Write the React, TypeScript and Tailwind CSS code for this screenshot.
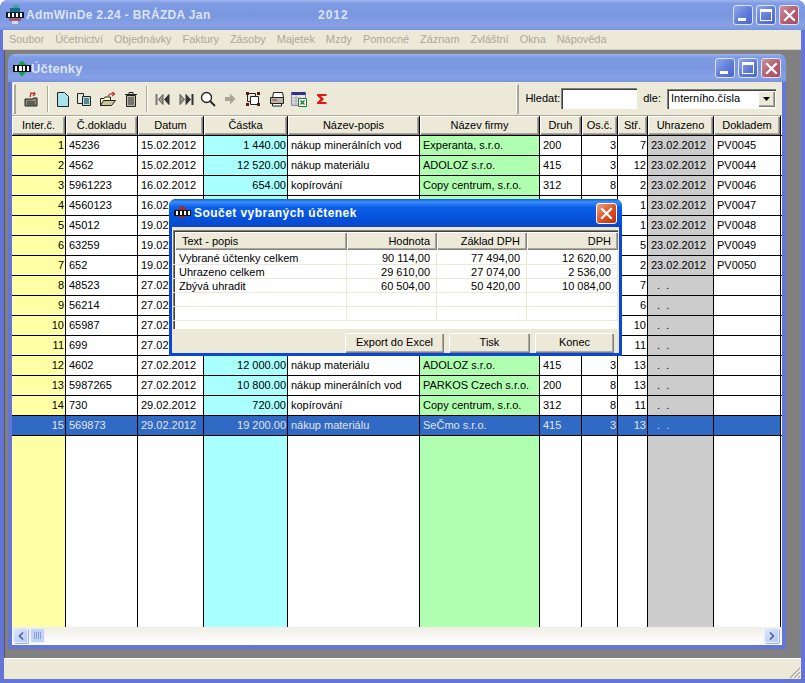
import { ChevronLeft, ChevronRight } from "lucide-react"

const cols = [
  { name: "Inter.č.", w: "w-[54px]", bg: "bg-[#ffffa6]", right: true },
  { name: "Č.dokladu", w: "w-[72px]", bg: "bg-white", right: false },
  { name: "Datum", w: "w-[66px]", bg: "bg-white", right: false },
  { name: "Částka", w: "w-[84px]", bg: "bg-[#aaffff]", right: true },
  { name: "Název-popis", w: "w-[132px]", bg: "bg-white", right: false },
  { name: "Název firmy", w: "w-[120px]", bg: "bg-[#b0ffb0]", right: false },
  { name: "Druh", w: "w-[42px]", bg: "bg-white", right: false },
  { name: "Os.č.", w: "w-[36px]", bg: "bg-white", right: true },
  { name: "Stř.", w: "w-[30px]", bg: "bg-white", right: true },
  { name: "Uhrazeno", w: "w-[66px]", bg: "bg-[#cccccc]", right: false },
  { name: "Dokladem", w: "w-[67px]", bg: "bg-white", right: false },
]

const rows = [
  ["1", "45236", "15.02.2012", "1 440.00", "nákup minerálních vod", "Experanta, s.r.o.", "200", "3", "7", "23.02.2012", "PV0045"],
  ["2", "4562", "15.02.2012", "12 520.00", "nákup materiálu", "ADOLOZ s.r.o.", "415", "3", "12", "23.02.2012", "PV0044"],
  ["3", "5961223", "16.02.2012", "654.00", "kopírování", "Copy centrum, s.r.o.", "312", "8", "2", "23.02.2012", "PV0046"],
  ["4", "4560123", "16.02.2012", "", "", "", "", "", "1", "23.02.2012", "PV0047"],
  ["5", "45012", "19.02.2012", "", "", "", "", "", "1", "23.02.2012", "PV0048"],
  ["6", "63259", "19.02.2012", "", "", "", "", "", "5", "23.02.2012", "PV0049"],
  ["7", "652", "19.02.2012", "", "", "", "", "", "2", "23.02.2012", "PV0050"],
  ["8", "48523", "27.02.2012", "", "", "", "", "", "7", "  .  .", ""],
  ["9", "56214", "27.02.2012", "", "", "", "", "", "6", "  .  .", ""],
  ["10", "65987", "27.02.2012", "", "", "", "", "", "10", "  .  .", ""],
  ["11", "699", "27.02.2012", "", "", "", "", "", "11", "  .  .", ""],
  ["12", "4602", "27.02.2012", "12 000.00", "nákup materiálu", "ADOLOZ s.r.o.", "415", "3", "13", "  .  .", ""],
  ["13", "5987265", "27.02.2012", "10 800.00", "nákup minerálních vod", "PARKOS Czech s.r.o.", "200", "8", "13", "  .  .", ""],
  ["14", "730", "29.02.2012", "720.00", "kopírování", "Copy centrum, s.r.o.", "312", "8", "11", "  .  .", ""],
  ["15", "569873", "29.02.2012", "19 200.00", "nákup materiálu", "SeČmo s.r.o.", "415", "3", "13", "  .  .", ""],
]

const sumCols = [
  { name: "Text - popis", w: "w-[172px]", right: false },
  { name: "Hodnota", w: "w-[90px]", right: true },
  { name: "Základ DPH", w: "w-[90px]", right: true },
  { name: "DPH", w: "w-[91px]", right: true },
]

const sumRows = [
  ["Vybrané účtenky celkem", "90 114,00", "77 494,00", "12 620,00"],
  ["Uhrazeno celkem", "29 610,00", "27 074,00", "2 536,00"],
  ["Zbývá uhradit", "60 504,00", "50 420,00", "10 084,00"],
  ["", "", "", ""],
  ["", "", "", ""],
]

const bevel = "shadow-[inset_1px_1px_0_#ffffff,inset_-1px_-1px_0_#808080,inset_-2px_-2px_0_#aca899]"
const sunken = "shadow-[inset_1px_1px_0_#808080,inset_2px_2px_0_#404040,inset_-1px_-1px_0_#ffffff]"
const caption = "bg-[linear-gradient(180deg,#9db3ee,#7f9be3_12%,#7a96df_50%,#86a1e6_85%,#7a94dc)]"

function WinBtn({ kind }: { kind: "min" | "max" | "close" }) {
  const color =
    kind === "close"
      ? "bg-[linear-gradient(135deg,#c8909c,#b45a6c_60%,#a84a5e)]"
      : "bg-[linear-gradient(135deg,#8fa8ea,#5c78d8_60%,#4a66cc)]"
  return (
    <div className={`w-[20px] h-[20px] ${color} rounded-[3px] border border-[#dfe6f8] flex items-center justify-center relative`}>
      {kind === "min" && <div className="absolute left-[4px] bottom-[3px] w-[8px] h-[3px] bg-white" />}
      {kind === "max" && <div className="w-[12px] h-[12px] border border-white border-t-[3px]" />}
      {kind === "close" && (
        <svg width="13" height="13" viewBox="0 0 13 13">
          <path d="M2 2 L11 11 M11 2 L2 11" stroke="#fff" strokeWidth="2.2" strokeLinecap="square" />
        </svg>
      )}
    </div>
  )
}

function AppIcon() {
  return (
    <svg width="18" height="20" viewBox="0 0 18 20" shapeRendering="crispEdges">
      <rect x="7" y="0" width="6" height="5" fill="#3aa0b0" />
      <rect x="4" y="3" width="10" height="4" fill="#1c6f80" />
      <rect x="0" y="7" width="18" height="6" fill="#111827" />
      <rect x="2" y="8" width="2" height="4" fill="#ffffff" />
      <rect x="6" y="8" width="2" height="4" fill="#ffffff" />
      <rect x="10" y="8" width="2" height="4" fill="#ffffff" />
      <rect x="14" y="8" width="2" height="4" fill="#ffffff" />
      <rect x="3" y="13" width="12" height="3" fill="#a05a78" />
      <rect x="6" y="16" width="6" height="3" fill="#d8d8e8" />
    </svg>
  )
}

function InnerIcon() {
  return (
    <svg width="18" height="17" viewBox="0 0 19 17" shapeRendering="crispEdges">
      <path d="M9.5 0 L17 8 L9.5 17 L2 8 Z" fill="#12a04a" shapeRendering="auto" />
      <rect x="0" y="5" width="19" height="7" fill="#111111" />
      <rect x="2" y="6" width="2" height="5" fill="#ffffff" />
      <rect x="6" y="6" width="3" height="5" fill="#ffffff" />
      <rect x="11" y="6" width="2" height="5" fill="#ffffff" />
      <rect x="15" y="6" width="2" height="5" fill="#ffffff" />
    </svg>
  )
}

function DialogIcon() {
  return (
    <svg width="17" height="16" viewBox="0 0 17 16" shapeRendering="crispEdges">
      <path d="M8 0 L15 7 L8 15 L1 7 Z" fill="#8c3040" shapeRendering="auto" />
      <rect x="0" y="5" width="17" height="6" fill="#111111" />
      <rect x="2" y="6" width="2" height="4" fill="#ffffff" />
      <rect x="6" y="6" width="2" height="4" fill="#ffffff" />
      <rect x="10" y="6" width="2" height="4" fill="#ffffff" />
      <rect x="14" y="6" width="2" height="4" fill="#ffffff" />
    </svg>
  )
}

const tools = [
  {
    ml: "ml-[7px]",
    w: 16,
    d: (
      <>
        <path d="M2 8 H9 L11 7 H14 V15 H2 Z" fill="#8a8a7a" stroke="#222" />
        <path d="M4 10 H12 V14 H4 Z" fill="#5e5e50" />
        <path d="M7 6 L8 2 L12 3 M11 1 L12 3 L10 5" fill="none" stroke="#c0302a" strokeWidth="1.3" />
      </>
    ),
  },
  {
    ml: "ml-[17px]",
    w: 14,
    d: <path d="M1.5 1.5 H8.5 L12.5 5.5 V15.5 H1.5 Z" fill="#a8e4ee" stroke="#222" />,
  },
  {
    ml: "ml-[6px]",
    w: 16,
    d: (
      <>
        <path d="M1.5 2.5 H7.5 V12.5 H1.5 Z" fill="#e8e8e0" stroke="#222" />
        <path d="M6.5 5.5 H14.5 V14.5 H6.5 Z" fill="#a8e4ee" stroke="#222" />
        <path d="M8 8 H13 M8 10 H13 M8 12 H13" stroke="#222" />
      </>
    ),
  },
  {
    ml: "ml-[7px]",
    w: 18,
    d: (
      <>
        <path d="M1.5 7.5 H5 L6 6 H11.5 V14.5 H1.5 Z" fill="#fff7c8" stroke="#222" />
        <path d="M1.5 14.5 L4.5 9.5 H16.5 L12.5 14.5 Z" fill="#c8c49c" stroke="#222" />
        <path d="M9 5 Q11 1.5 15 3 M13.5 1 L15.5 3 L13 5" fill="none" stroke="#c0302a" strokeWidth="1.2" />
      </>
    ),
  },
  {
    ml: "ml-[7px]",
    w: 14,
    d: (
      <>
        <path d="M1 3.5 H13 M5 3 V1.5 H9 V3" fill="none" stroke="#222" />
        <path d="M2.5 4.5 H11.5 V15.5 H2.5 Z" fill="#b8b8a8" stroke="#222" />
        <path d="M5 6 V14 M7 6 V14 M9 6 V14" stroke="#333" />
      </>
    ),
  },
  {
    ml: "ml-[17px]",
    w: 16,
    d: (
      <>
        <path d="M1.5 3 V14" stroke="#777" strokeWidth="2" />
        <path d="M8 3.5 L3.5 8.5 L8 13.5 Z" fill="#9a9a8c" stroke="#555" />
        <path d="M14 3.5 L9.5 8.5 L14 13.5 Z" fill="#333" stroke="#333" />
      </>
    ),
  },
  {
    ml: "ml-[7px]",
    w: 16,
    d: (
      <>
        <path d="M14.5 3 V14" stroke="#333" strokeWidth="2" />
        <path d="M8 3.5 L12.5 8.5 L8 13.5 Z" fill="#333" stroke="#333" />
        <path d="M2 3.5 L6.5 8.5 L2 13.5 Z" fill="#9a9a8c" stroke="#555" />
      </>
    ),
  },
  {
    ml: "ml-[6px]",
    w: 16,
    d: (
      <>
        <circle cx="6.5" cy="6.5" r="5" fill="#ffffff" stroke="#222" strokeWidth="1.3" />
        <path d="M10 10 L15 15" stroke="#222" strokeWidth="1.8" />
      </>
    ),
  },
  {
    ml: "ml-[8px]",
    w: 12,
    d: <path d="M1 6 H6 V2.5 L11.5 8 L6 13.5 V10 H1 Z" fill="#a8a498" />,
  },
  {
    ml: "ml-[9px]",
    w: 16,
    d: (
      <>
        <path d="M2.5 2.5 H10.5 V10.5 H2.5 Z" fill="none" stroke="#222" />
        <path d="M5.5 5.5 H13.5 V13.5 H5.5 Z" fill="#ffffff" stroke="#222" />
        <path d="M1 1 H4 V4 H1 Z M12 1 H15 V4 H12 Z M1 12 H4 V15 H1 Z M12 12 H15 V15 H12 Z" fill="#5c1a14" />
      </>
    ),
  },
  {
    ml: "ml-[8px]",
    w: 16,
    d: (
      <>
        <path d="M4.5 1.5 H13.5 L14.5 6.5 H3.5 Z" fill="#ffffff" stroke="#222" />
        <path d="M1.5 6.5 H14.5 V12.5 H1.5 Z" fill="#b8b8a8" stroke="#222" />
        <path d="M3 9 H8" stroke="#c0302a" />
        <path d="M3.5 12.5 H12.5 V15 H3.5 Z" fill="#ffffff" stroke="#222" />
      </>
    ),
  },
  {
    ml: "ml-[6px]",
    w: 16,
    d: (
      <>
        <path d="M0.5 1.5 H14.5 V14.5 H0.5 Z" fill="#e8e8e0" stroke="#8a8aa8" />
        <path d="M0.5 1 H14.5 V4 H0.5 Z" fill="#30308c" />
        <path d="M1 7 H9 M1 10 H9 M1 13 H9 M5 4 V15" stroke="#a8a8a8" />
        <path d="M7.5 7.5 H15.5 V15.5 H7.5 Z" fill="#ffffff" stroke="#1c7a30" />
        <path d="M9.5 9.5 L13.5 13.5 M13.5 9.5 L9.5 13.5" stroke="#1c7a30" strokeWidth="1.5" />
      </>
    ),
  },
  {
    ml: "ml-[9px]",
    w: 12,
    d: <path d="M1 3 H10.5 V5 H5 L8 8 L5 11 H10.5 V13 H1 V11.5 L4.5 8 L1 4.5 Z" fill="#e01818" />,
  },
]

const grip = "w-[3px] border-l border-t border-white border-r-2 border-r-[#aca899] border-b border-b-[#aca899]"

function Grid() {
  return (
    <div className="flex-1 min-h-0 flex flex-col bg-white text-[11px] leading-[19px] text-black">
      <div className="flex h-[20px] shrink-0 border-b border-black">
        {cols.map((c) => (
          <div
            key={c.name}
            className={`${c.w} h-full shrink-0 border-r border-black bg-[#ece9d8] text-center ${bevel}`}
          >
            {c.name}
          </div>
        ))}
      </div>
      {rows.map((r, i) => {
        const sel = i === rows.length - 1
        return (
          <div key={r[0]} className="flex h-[20px] shrink-0 border-b border-black">
            {cols.map((c, j) => (
              <div
                key={c.name}
                className={`${c.w} h-full shrink-0 border-r border-black pl-[3px] pr-[1px] whitespace-pre overflow-hidden ${
                  c.right ? "text-right" : "text-left"
                } ${sel ? "bg-[#316ac5] text-[#e4e4e4]" : c.bg}`}
              >
                {r[j]}
              </div>
            ))}
          </div>
        )
      })}
      <div className="flex flex-1 min-h-0">
        {cols.map((c) => (
          <div key={c.name} className={`${c.w} h-full shrink-0 border-r border-black ${c.bg}`} />
        ))}
      </div>
    </div>
  )
}

function ScrollBtn({ children }: { children: React.ReactNode }) {
  return (
    <div className="w-[15px] h-[15px] rounded-[2px] border border-[#e8eefc] bg-[linear-gradient(135deg,#dbe6fd,#b4c8f6)] flex items-center justify-center text-[#4d6185] shadow-[1px_1px_0_#9fb4dc]">
      {children}
    </div>
  )
}

function SumDialog() {
  return (
    <div className="absolute left-[169px] top-[199px] w-[453px] h-[157px] rounded-t-[7px] bg-[#0a46d8] p-[3px] pt-0 flex flex-col text-[11px]">
      <div className="h-[28px] shrink-0 -mx-[3px] px-[5px] rounded-t-[7px] bg-[linear-gradient(180deg,#0a5be8,#3a8cf8_10%,#0a5fe8_30%,#0550d8_75%,#0a46c8)] flex items-center gap-[3px]">
        <DialogIcon />
        <span className="flex-1 text-white font-bold text-[12px] tracking-[0.45px]">Součet vybraných účtenek</span>
        <div className="w-[21px] h-[21px] rounded-[3px] border border-white bg-[linear-gradient(135deg,#eca080,#d84a20_60%,#c03010)] flex items-center justify-center">
          <svg width="13" height="13" viewBox="0 0 13 13">
            <path d="M2 2 L11 11 M11 2 L2 11" stroke="#fff" strokeWidth="2.2" strokeLinecap="square" />
          </svg>
        </div>
      </div>
      <div className="flex-1 min-h-0 bg-[#ece9d8] flex flex-col pt-[3px] px-[1px]">
        <div className={`h-[99px] bg-white overflow-hidden ${sunken}`}>
          <div className="flex h-[18px] pl-[2px] pt-[2px] mb-[1px] box-content">
            {sumCols.map((c) => (
              <div
                key={c.name}
                className={`${c.w} shrink-0 h-[18px] bg-[#ece9d8] pl-[7px] pr-[7px] leading-[18px] ${
                  c.right ? "text-right" : "text-left"
                } ${bevel}`}
              >
                {c.name}
              </div>
            ))}
          </div>
          {sumRows.map((r, i) => (
            <div key={i} className="flex h-[14px] pl-[2px] leading-[14px] border-b border-[#ece9d8]">
              {sumCols.map((c, j) => (
                <div
                  key={c.name}
                  className={`${c.w} shrink-0 h-full border-r border-[#ece9d8] pl-[4px] pr-[6px] ${
                    c.right ? "text-right" : "text-left"
                  }`}
                >
                  {r[j]}
                </div>
              ))}
            </div>
          ))}
        </div>
        <div className="flex justify-end gap-[5px] pr-[4px] pt-[4px]">
          <div className={`w-[99px] h-[20px] bg-[#ece9d8] text-center leading-[19px] ${bevel}`}>Export do Excel</div>
          <div className={`w-[81px] h-[20px] bg-[#ece9d8] text-center leading-[19px] ${bevel}`}>Tisk</div>
          <div className={`w-[79px] h-[20px] bg-[#ece9d8] text-center leading-[19px] ${bevel}`}>Konec</div>
        </div>
      </div>
    </div>
  )
}

export default function App() {
  return (
    <div className="relative w-[805px] h-[683px] overflow-hidden rounded-t-[8px] bg-[#6375d6] px-[4px] pb-[4px] flex flex-col font-['Liberation_Sans',sans-serif] text-[11px] text-black">
      <div className={`h-[30px] shrink-0 -mx-[4px] px-[6px] rounded-t-[8px] ${caption} flex items-center`}>
        <AppIcon />
        <span className="ml-[2px] w-[292px] font-bold text-[12px] text-[#dce4f8] tracking-[0.35px] whitespace-nowrap">
          AdmWinDe 2.24 - BRÁZDA Jan
        </span>
        <span className="flex-1 font-bold text-[12px] text-[#dce4f8] tracking-[1px]">2012</span>
        <div className="flex gap-[3px]">
          <WinBtn kind="min" />
          <WinBtn kind="max" />
          <WinBtn kind="close" />
        </div>
      </div>

      <div className="h-[20px] shrink-0 -ml-[1px] pl-[6px] bg-[#ece9d8] flex items-center gap-[11px] tracking-[-0.05px] text-[#aca899] border-b border-[#d4d0c0]">
        {["Soubor", "Účetnictví", "Objednávky", "Faktury", "Zásoby", "Majetek", "Mzdy", "Pomocné", "Záznam", "Zvláštní", "Okna", "Nápověda"].map((m) => (
          <span key={m}>{m}</span>
        ))}
      </div>

      <div className="flex-1 min-h-0 bg-[#808080] pl-[4px] pr-[15px] pt-[4px] pb-[9px] flex flex-col border-l border-[#5a5a5a]">
        <div className="flex-1 min-h-0 -ml-[1px] rounded-t-[7px] bg-[#6375d6] px-[4px] pb-[4px] flex flex-col">
          <div className={`h-[28px] shrink-0 -mx-[4px] pl-[5px] pr-[5px] rounded-t-[7px] ${caption} flex items-center`}>
            <InnerIcon />
            <span className="flex-1 pt-[2px] font-bold text-[13px] text-[#dce4f8] tracking-[0.15px]">Účtenky</span>
            <div className="flex gap-[3px]">
              <WinBtn kind="min" />
              <WinBtn kind="max" />
              <WinBtn kind="close" />
            </div>
          </div>

          <div className="h-[34px] shrink-0 bg-[#ece9d8] flex items-center pl-[1px] border-b border-[#aca899]">
            <div className={`${grip} h-[30px]`} />
            {tools.map((t, i) => (
              <div key={i} className={`${t.ml} flex items-center`}>
                {(i === 1 || i === 5) && (
                  <div className="w-[2px] h-[26px] -ml-[9px] mr-[7px] border-l border-[#aca899] border-r border-r-white" />
                )}
                <svg width={t.w} height="16" viewBox={`0 0 ${t.w} 16`}>
                  {t.d}
                </svg>
              </div>
            ))}
            <div className="flex-1" />
            <div className={`${grip} h-[30px]`} />
            <span className="ml-[6px]">Hledat:</span>
            <div className={`ml-[1px] w-[76px] h-[21px] bg-white ${sunken}`} />
            <span className="ml-[6px]">dle:</span>
            <div className={`ml-[6px] mr-[6px] w-[109px] h-[20px] bg-white flex items-center pl-[4px] ${sunken}`}>
              <span className="flex-1">Interního.čísla</span>
              <div className={`w-[17px] h-[16px] mr-[1px] bg-[#ece9d8] flex items-center justify-center ${bevel}`}>
                <svg width="7" height="4" viewBox="0 0 7 4">
                  <path d="M0 0 H7 L3.5 4 Z" fill="#000" />
                </svg>
              </div>
            </div>
          </div>

          <Grid />

          <div className="h-[18px] shrink-0 bg-[linear-gradient(180deg,#f0eee6,#fefefe)] flex items-center pl-[1px] pr-[3px] border-b border-white">
            <ScrollBtn>
              <ChevronLeft size={12} strokeWidth={3.5} />
            </ScrollBtn>
            <div className="ml-[2px] w-[15px] h-[15px] rounded-[2px] border border-[#e8eefc] bg-[#c4d4f8] flex items-center justify-center gap-[1px]">
              {[0, 1, 2, 3].map((k) => (
                <div key={k} className="w-[1px] h-[7px] bg-[#8aa0d0]" />
              ))}
            </div>
            <div className="flex-1" />
            <ScrollBtn>
              <ChevronRight size={12} strokeWidth={3.5} />
            </ScrollBtn>
          </div>
        </div>
      </div>

      <div className="h-[21px] shrink-0 bg-[#ece9d8] border-t border-white relative">
        <svg className="absolute right-0 bottom-0" width="12" height="12" viewBox="0 0 12 12">
          <path d="M11 1 L1 11 M11 5 L5 11 M11 9 L9 11" stroke="#aca899" strokeWidth="1.2" />
          <path d="M12 2 L2 12 M12 6 L6 12 M12 10 L10 12" stroke="#ffffff" />
        </svg>
      </div>

      <SumDialog />
    </div>
  )
}
